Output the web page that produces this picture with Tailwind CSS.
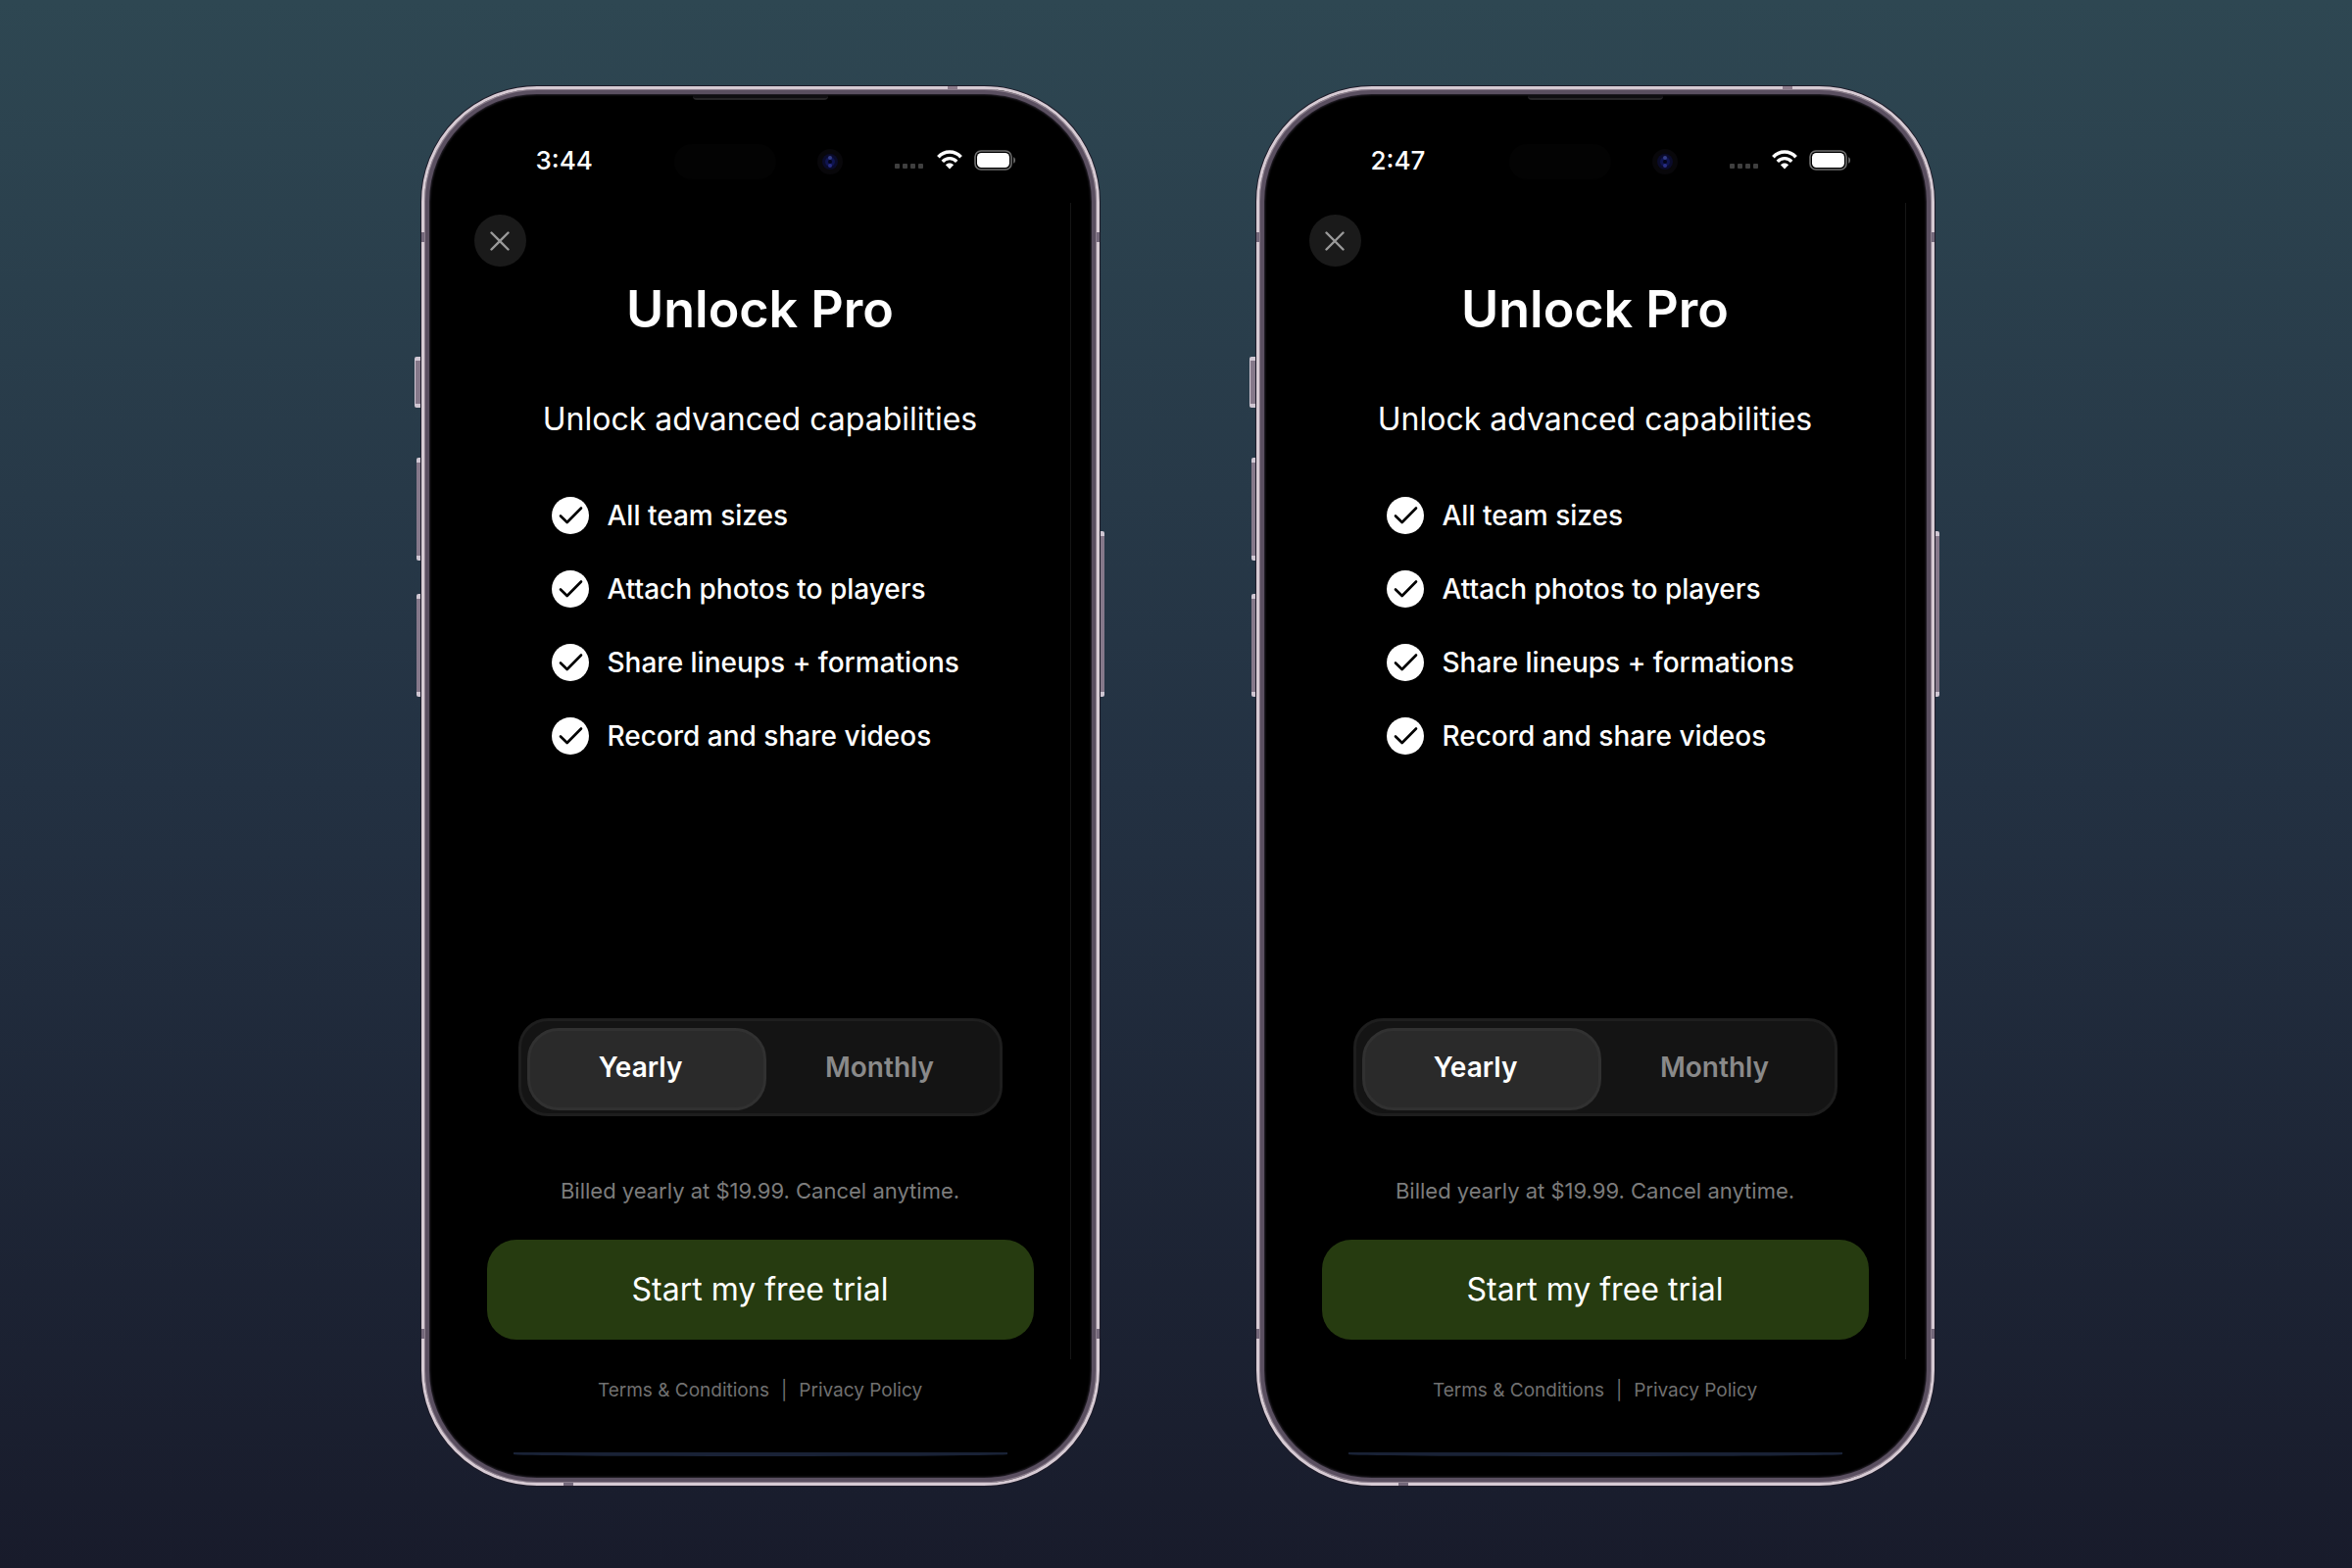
<!DOCTYPE html>
<html lang="en">
<head>
  <meta charset="UTF-8" />
  <meta name="viewport" content="width=device-width, initial-scale=1.0"/>
  <title>Unlock Pro</title>
  <script src="https://cdn.jsdelivr.net/npm/@tailwindcss/browser@4"></script>
</head>
<body class="bg-linear-to-b from-[#2e4752] via-[#233142] to-[#181b2b] min-h-screen font-['Inter',sans-serif] text-white antialiased">
  <main id="phones" class="flex flex-wrap justify-center gap-40 pt-22 pb-10 pl-[3px]"></main>

  <script>
    const features = [
      "All team sizes",
      "Attach photos to players",
      "Share lineups + formations",
      "Record and share videos"
    ];

    const featureItem = text => `
      <li class="flex items-center gap-[19px]">
        <svg class="size-[38px] shrink-0" viewBox="0 0 38 38" fill="none" aria-hidden="true">
          <circle cx="19" cy="19" r="19" fill="#fff"/>
          <path d="M9 19.5 L15.7 26 L30 11.5" stroke="#000" stroke-width="2.6" stroke-linecap="round" stroke-linejoin="round"/>
        </svg>
        <span>${text}</span>
      </li>`;

    const phone = (time, n) => `
      <section class="relative flex flex-col w-full max-w-[692px] rounded-[118px] bg-black border-3 border-[#d6cad3] shadow-[0_0_0_1px_#1d1b29,inset_0_0_0_1px_#8b7d8c,inset_0_0_0_5px_#5a4f60,inset_0_0_2px_6px_#2b2630] pt-14 pb-20">
        <!-- Side buttons -->
        <i class="absolute -left-[10px] top-[273px] w-[6px] h-[52px] rounded-l-xs bg-[#85788a] border-y-4 border-l border-[#cfc6d2]"></i>
        <i class="absolute -left-2 top-[376px] w-1 h-[105px] rounded-l-xs bg-[#85788a] border-y-5 border-[#cfc6d2]"></i>
        <i class="absolute -left-2 top-[515px] w-1 h-[105px] rounded-l-xs bg-[#85788a] border-y-5 border-[#cfc6d2]"></i>
        <i class="absolute -right-2 top-[451px] w-1 h-[169px] rounded-r-xs bg-[#85788a] border-y-5 border-[#cfc6d2]"></i>
        <!-- Antenna bands -->
        <i class="absolute -left-[3px] top-[146px] w-[3px] h-[10px] bg-[#74687a]"></i>
        <i class="absolute -right-[3px] top-[146px] w-[3px] h-[10px] bg-[#74687a]"></i>
        <i class="absolute -left-[3px] bottom-[147px] w-[3px] h-[10px] bg-[#74687a]"></i>
        <i class="absolute -right-[3px] bottom-[147px] w-[3px] h-[10px] bg-[#74687a]"></i>
        <i class="absolute right-[142px] -top-[3px] w-[10px] h-[3px] bg-[#8b7a8a]"></i>
        <i class="absolute left-[142px] -bottom-[3px] w-[10px] h-[3px] bg-[#74687a]"></i>
        <!-- Speaker slot, island and camera -->
        <i class="absolute inset-x-0 top-[6px] mx-auto w-[138px] h-[5px] rounded-b-sm bg-[#0f0e11] border-b-2 border-[#252426]"></i>
        <i class="absolute left-[255px] top-14 w-[104px] h-[36px] rounded-full bg-[#030303]"></i>
        <svg class="absolute left-[400px] top-[60px] size-7" viewBox="0 0 28 28" aria-hidden="true">
          <circle cx="14" cy="14" r="13" fill="#08070a"/>
          <circle cx="14" cy="14" r="8" fill="#0a0b2a"/>
          <circle cx="14" cy="14" r="5" fill="#0f1450"/>
          <circle cx="14" cy="10" r="2" fill="#333d85"/>
          <circle cx="14" cy="18" r="2" fill="#282d85"/>
          <circle cx="14" cy="14" r="2" fill="#04051a"/>
        </svg>
        <!-- Screen edges -->
        <i class="absolute right-[26px] top-[116px] bottom-[126px] w-px bg-[#161616]"></i>
        <i class="absolute inset-x-[91px] bottom-[27px] h-1 rounded-b-[100%] bg-[#192236]"></i>

        <div class="flex items-center justify-between pl-[114px] pr-[82px] h-8">
          <time class="text-[26px] font-medium">${time}</time>
          <div class="flex items-center gap-3">
            <svg class="w-[31px] h-[22px]" viewBox="0 0 31 22" fill="#3f3f3f" aria-label="No signal">
              <rect x="0" y="15" width="5" height="5" rx="1"/>
              <rect x="8" y="15" width="5" height="5" rx="1"/>
              <rect x="16" y="15" width="5" height="5" rx="1"/>
              <rect x="24" y="15" width="5" height="5" rx="1"/>
            </svg>
            <svg class="w-[26px] h-[20px]" viewBox="0 0 26 20" fill="none" stroke="#fff" aria-label="Wi-Fi">
              <path d="M1.4 7.2 C7.8 0.3 18.2 0.3 24.6 7.2" stroke-width="3.6"/>
              <path d="M5.8 11.8 C9.8 7.6 16.2 7.6 20.2 11.8" stroke-width="3.4"/>
              <path d="M13 19.5 L8.9 15.3 C11.2 13 14.8 13 17.1 15.3 Z" fill="#fff" stroke="none"/>
            </svg>
            <svg class="w-[43px] h-[21px]" viewBox="0 0 43 21" fill="none" aria-label="Battery full">
              <rect x="1" y="1" width="37" height="19" rx="6" stroke="#6e6e6e" stroke-width="1.6"/>
              <rect x="3" y="3" width="33" height="15" rx="4.5" fill="#fff"/>
              <path d="M40.2 7.2 C42.6 8.4 42.6 12.6 40.2 13.8 Z" fill="#6e6e6e"/>
            </svg>
          </div>
        </div>

        <button type="button" aria-label="Close" class="mt-10 ml-[51px] size-[53px] rounded-full bg-[#1a1a1a] flex items-center justify-center">
          <svg class="size-5" viewBox="0 0 20 20" stroke="#9a9a9a" stroke-width="2.4" stroke-linecap="round" aria-hidden="true">
            <path d="M1.5 1.5 L18.5 18.5 M18.5 1.5 L1.5 18.5"/>
          </svg>
        </button>

        <h1 class="mt-[14px] text-center text-[52px] leading-[60px] font-semibold">Unlock Pro</h1>
        <p class="mt-[62px] text-center text-[32px] leading-10">Unlock advanced capabilities</p>

        <ul class="mt-[59px] ml-[130px] flex flex-col gap-[37px] text-[28px] leading-[38px] font-medium">
          ${features.map(featureItem).join("")}
        </ul>

        <!-- Billing period -->
        <div role="radiogroup" aria-label="Billing period" class="mt-[269px] mx-24 h-[100px] flex rounded-[30px] bg-[#141414] border-3 border-[#1e1e1e] text-[28px] font-semibold">
          <label class="relative flex-1 flex items-center justify-center">
            <input type="radio" name="period-${n}" value="yearly" checked class="peer sr-only"/>
            <i class="absolute left-[6px] -right-[6px] top-[7px] bottom-[3px] rounded-[32px] border-3 border-transparent peer-checked:bg-[#2a2a2a] peer-checked:border-[#313131]"></i>
            <span class="relative text-[#8a8a8a] peer-checked:text-white">Yearly</span>
          </label>
          <label class="relative flex-1 flex items-center justify-center">
            <input type="radio" name="period-${n}" value="monthly" class="peer sr-only"/>
            <i class="absolute -left-[6px] right-[6px] top-[7px] bottom-[3px] rounded-[32px] border-3 border-transparent peer-checked:bg-[#2a2a2a] peer-checked:border-[#313131]"></i>
            <span class="relative text-[#8a8a8a] peer-checked:text-white">Monthly</span>
          </label>
        </div>

        <p class="mt-[60px] text-center text-[22px] leading-8 text-[#7c7c7c]">Billed yearly at $19.99. Cancel anytime.</p>

        <button type="button" class="mt-[34px] mx-16 h-[102px] rounded-[30px] bg-[#263b10] text-[32px]">Start my free trial</button>

        <div class="mt-[38px] flex justify-center gap-3 text-[19px] leading-7 text-[#707070]">
          <a href="#terms">Terms &amp; Conditions</a>
          <span>|</span>
          <a href="#privacy">Privacy Policy</a>
        </div>
      </section>`;

    document.getElementById("phones").innerHTML = phone("3:44", 1) + phone("2:47", 2);
  </script>
</body>
</html>
